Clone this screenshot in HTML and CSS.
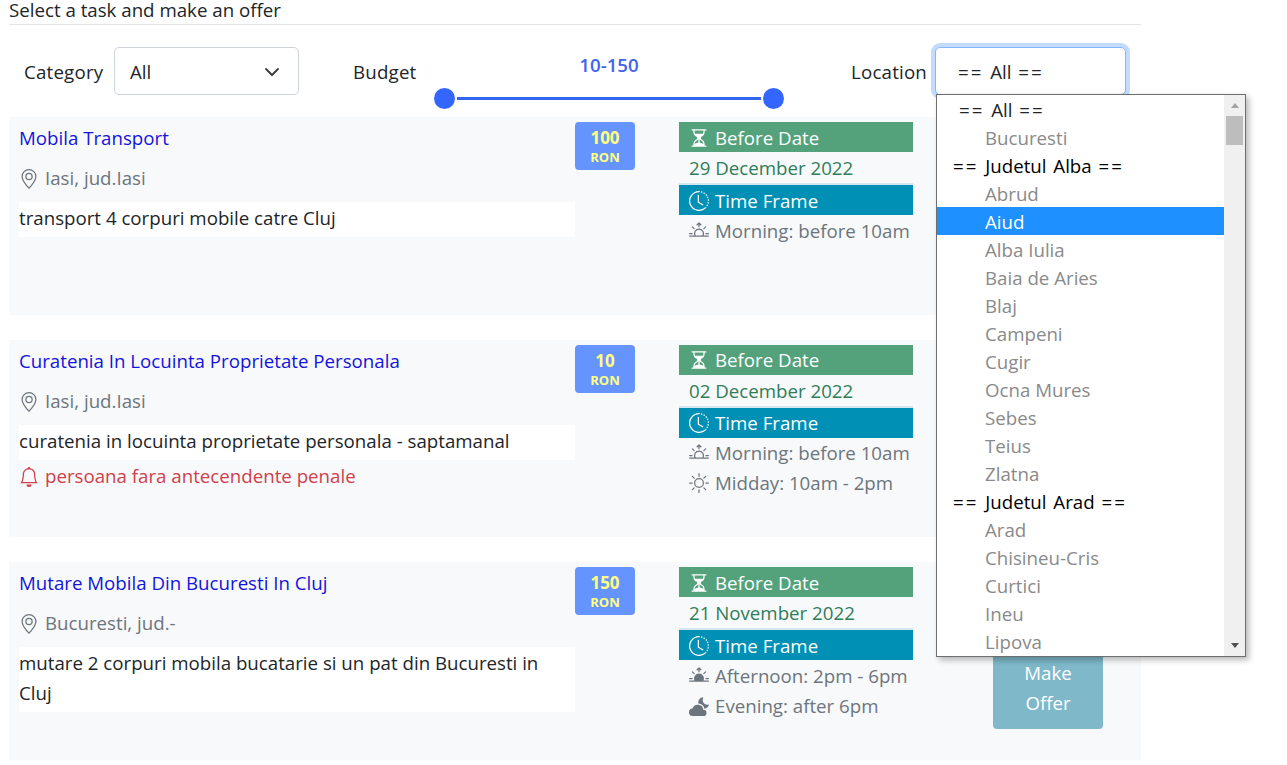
FILE: index.html
```html
<!DOCTYPE html>
<html lang="en">
<head>
  <meta charset="utf-8">
  <title>Tasks</title>
  <link rel="stylesheet" href="styles.css">
</head>
<body>
  <svg class="sprite" xmlns="http://www.w3.org/2000/svg">
    <symbol id="i-geo" viewBox="0 0 16 16"><path d="M12.166 8.94c-.524 1.062-1.234 2.12-1.96 3.07A31.493 31.493 0 0 1 8 14.58a31.481 31.481 0 0 1-2.206-2.57c-.726-.95-1.436-2.008-1.96-3.07C3.304 7.867 3 6.862 3 6a5 5 0 0 1 10 0c0 .862-.305 1.867-.834 2.94zM8 16s6-5.686 6-10A6 6 0 0 0 2 6c0 4.314 6 10 6 10z"/><path d="M8 8a2 2 0 1 1 0-4 2 2 0 0 1 0 4zm0 1a3 3 0 1 0 0-6 3 3 0 0 0 0 6z"/></symbol>
    <symbol id="i-bell" viewBox="0 0 16 16"><path d="M8 16a2 2 0 0 0 2-2H6a2 2 0 0 0 2 2zM8 1.918l-.797.161A4.002 4.002 0 0 0 4 6c0 .628-.134 2.197-.459 3.742-.16.767-.376 1.566-.663 2.258h10.244c-.287-.692-.502-1.49-.663-2.258C12.134 8.197 12 6.628 12 6a4.002 4.002 0 0 0-3.203-3.92L8 1.917zM14.22 12c.223.447.481.801.78 1H1c.299-.199.557-.553.78-1C2.68 10.2 3 6.88 3 6c0-2.42 1.72-4.44 4.005-4.901a1 1 0 1 1 1.99 0A5.002 5.002 0 0 1 13 6c0 .88.32 4.2 1.22 6z"/></symbol>
    <symbol id="i-hourglass" viewBox="0 0 16 16"><path d="M2.5 15a.5.5 0 1 1 0-1h1v-1a4.5 4.5 0 0 1 2.557-4.06c.29-.139.443-.377.443-.59v-.7c0-.213-.154-.451-.443-.59A4.5 4.5 0 0 1 3.5 3V2h-1a.5.5 0 0 1 0-1h11a.5.5 0 0 1 0 1h-1v1a4.5 4.5 0 0 1-2.557 4.06c-.29.139-.443.377-.443.59v.7c0 .213.154.451.443.59A4.5 4.5 0 0 1 12.5 13v1h1a.5.5 0 0 1 0 1h-11zm2-13v1c0 .537.12 1.045.337 1.5h6.326c.216-.455.337-.963.337-1.5V2h-7zm3 6.35c0 .701-.478 1.236-1.011 1.492A3.5 3.5 0 0 0 4.5 13s.866-1.299 3-1.48V8.35zm1 0v3.17c2.134.181 3 1.48 3 1.48a3.5 3.5 0 0 0-1.989-3.158C8.978 9.586 8.5 9.052 8.5 8.351z"/></symbol>
    <symbol id="i-clock" viewBox="0 0 16 16"><path d="M8.515 1.019A7 7 0 0 0 8 1V0a8 8 0 0 1 .589.022l-.074.997zm2.004.45a7.003 7.003 0 0 0-.985-.299l.219-.976c.383.086.76.2 1.126.342l-.36.933zm1.37.71a7.01 7.01 0 0 0-.439-.27l.493-.87a8.025 8.025 0 0 1 .979.654l-.615.789a6.996 6.996 0 0 0-.418-.302zm1.834 1.79a6.99 6.99 0 0 0-.653-.796l.724-.69c.27.285.52.59.747.91l-.818.576zm.744 1.352a7.08 7.08 0 0 0-.214-.468l.893-.45a7.976 7.976 0 0 1 .45 1.088l-.95.313a7.023 7.023 0 0 0-.179-.483zm.53 2.507a6.991 6.991 0 0 0-.1-1.025l.985-.17c.067.386.106.778.116 1.17l-1 .025zm-.131 1.538c.033-.17.06-.339.081-.51l.993.123a7.957 7.957 0 0 1-.23 1.155l-.964-.267c.046-.165.086-.332.12-.501zm-.952 2.379c.184-.29.346-.594.486-.908l.914.405c-.16.36-.345.706-.555 1.038l-.845-.535zm-.964 1.205c.122-.122.239-.248.35-.378l.758.653a8.073 8.073 0 0 1-.401.432l-.707-.707z"/><path d="M8 1a7 7 0 1 0 4.95 11.95l.707.707A8.001 8.001 0 1 1 8 0v1z"/><path d="M7.5 3a.5.5 0 0 1 .5.5v5.21l3.248 1.856a.5.5 0 0 1-.496.868l-3.5-2A.5.5 0 0 1 7 9V3.5a.5.5 0 0 1 .5-.5z"/></symbol>
    <symbol id="i-sunrise" viewBox="0 0 16 16"><path d="M7.646 1.146a.5.5 0 0 1 .708 0l1.5 1.5a.5.5 0 0 1-.708.708L8.5 2.707V4.5a.5.5 0 0 1-1 0V2.707l-.646.647a.5.5 0 1 1-.708-.708l1.5-1.5zM2.343 4.343a.5.5 0 0 1 .707 0l1.414 1.414a.5.5 0 0 1-.707.707L2.343 5.05a.5.5 0 0 1 0-.707zm11.314 0a.5.5 0 0 1 0 .707l-1.414 1.414a.5.5 0 1 1-.707-.707l1.414-1.414a.5.5 0 0 1 .707 0zM8 7a3 3 0 0 1 2.599 4.5H5.4A3 3 0 0 1 8 7zm3.71 4.5a4 4 0 1 0-7.418 0H.499a.5.5 0 0 0 0 1h15a.5.5 0 0 0 0-1h-3.79zM0 10a.5.5 0 0 1 .5-.5h2a.5.5 0 0 1 0 1h-2A.5.5 0 0 1 0 10zm13 0a.5.5 0 0 1 .5-.5h2a.5.5 0 0 1 0 1h-2a.5.5 0 0 1-.5-.5z"/></symbol>
    <symbol id="i-sun" viewBox="0 0 16 16"><path d="M8 11a3 3 0 1 1 0-6 3 3 0 0 1 0 6zm0 1a4 4 0 1 0 0-8 4 4 0 0 0 0 8zM8 0a.5.5 0 0 1 .5.5v2a.5.5 0 0 1-1 0v-2A.5.5 0 0 1 8 0zm0 13a.5.5 0 0 1 .5.5v2a.5.5 0 0 1-1 0v-2A.5.5 0 0 1 8 13zm8-5a.5.5 0 0 1-.5.5h-2a.5.5 0 0 1 0-1h2a.5.5 0 0 1 .5.5zM3 8a.5.5 0 0 1-.5.5h-2a.5.5 0 0 1 0-1h2A.5.5 0 0 1 3 8zm10.657-5.657a.5.5 0 0 1 0 .707l-1.414 1.415a.5.5 0 1 1-.707-.708l1.414-1.414a.5.5 0 0 1 .707 0zm-9.193 9.193a.5.5 0 0 1 0 .707L3.05 13.657a.5.5 0 0 1-.707-.707l1.414-1.414a.5.5 0 0 1 .707 0zm9.193 2.121a.5.5 0 0 1-.707 0l-1.414-1.414a.5.5 0 0 1 .707-.707l1.414 1.414a.5.5 0 0 1 0 .707zM4.464 4.465a.5.5 0 0 1-.707 0L2.343 3.05a.5.5 0 1 1 .707-.707l1.414 1.414a.5.5 0 0 1 0 .708z"/></symbol>
    <symbol id="i-sunset" viewBox="0 0 16 16"><path d="M7.646 1.146a.5.5 0 0 1 .708 0l1.5 1.5a.5.5 0 0 1-.708.708L8.5 2.707V4.5a.5.5 0 0 1-1 0V2.707l-.646.647a.5.5 0 1 1-.708-.708l1.5-1.5zM2.343 4.343a.5.5 0 0 1 .707 0l1.414 1.414a.5.5 0 0 1-.707.707L2.343 5.05a.5.5 0 0 1 0-.707zm11.314 0a.5.5 0 0 1 0 .707l-1.414 1.414a.5.5 0 1 1-.707-.707l1.414-1.414a.5.5 0 0 1 .707 0zM11.709 11.5a4 4 0 1 0-7.418 0H.5a.5.5 0 0 0 0 1h15a.5.5 0 0 0 0-1h-3.79zM0 10a.5.5 0 0 1 .5-.5h2a.5.5 0 0 1 0 1h-2A.5.5 0 0 1 0 10zm13 0a.5.5 0 0 1 .5-.5h2a.5.5 0 0 1 0 1h-2a.5.5 0 0 1-.5-.5z"/></symbol>
    <symbol id="i-moon" viewBox="0 0 16 16"><path d="M11.473 11a4.5 4.5 0 0 0-8.72-.99A3 3 0 0 0 3 16h8.5a2.5 2.5 0 0 0 0-5h-.027z"/><path d="M11.3 1.8a.5.5 0 0 0-.6-.75A4.6 4.6 0 0 0 7.5 6a5.5 5.5 0 0 1 4.9 4.1 4.6 4.6 0 0 0 3.5-2.6.5.5 0 0 0-.7-.6 3.6 3.6 0 0 1-3.9-5.1z"/></symbol>
  </svg>

  <div class="container">
    <div class="page-title">Select a task and make an offer</div>

    <div class="filters">
      <span class="filter-label">Category</span>
      <div class="select category-select">
        <span>All</span>
        <svg class="chevron" viewBox="0 0 16 16"><path fill="none" stroke="#343a40" stroke-linecap="round" stroke-linejoin="round" stroke-width="1.8" d="M2 5l6 6 6-6"/></svg>
      </div>
      <span class="filter-label budget-label">Budget</span>
      <div class="budget">
        <div class="budget-value">10-150</div>
        <div class="slider">
          <span class="thumb"></span>
          <span class="track"></span>
          <span class="thumb"></span>
        </div>
      </div>
      <span class="filter-label location-label">Location</span>
      <div class="select location-select">
        <span class="all-value"><span class="eq">==</span> All <span class="eq">==</span></span>
        <div class="dropdown">
          <ul class="options">
            <li class="top"><span class="eq">==</span> All <span class="eq">==</span></li>
            <li class="item">Bucuresti</li>
            <li class="group"><span class="eq">==</span> Judetul Alba <span class="eq">==</span></li>
            <li class="item">Abrud</li>
            <li class="item selected">Aiud</li>
            <li class="item">Alba Iulia</li>
            <li class="item">Baia de Aries</li>
            <li class="item">Blaj</li>
            <li class="item">Campeni</li>
            <li class="item">Cugir</li>
            <li class="item">Ocna Mures</li>
            <li class="item">Sebes</li>
            <li class="item">Teius</li>
            <li class="item">Zlatna</li>
            <li class="group"><span class="eq">==</span> Judetul Arad <span class="eq">==</span></li>
            <li class="item">Arad</li>
            <li class="item">Chisineu-Cris</li>
            <li class="item">Curtici</li>
            <li class="item">Ineu</li>
            <li class="item">Lipova</li>
          </ul>
          <div class="scrollbar">
            <span class="arrow-up"></span>
            <span class="scroll-thumb"></span>
            <span class="arrow-down"></span>
          </div>
        </div>
      </div>
    </div>

    <div class="task">
      <div class="task-main">
        <a class="task-title" href="#">Mobila Transport</a>
        <div class="task-place"><svg class="icon"><use href="#i-geo"/></svg>Iasi, jud.Iasi</div>
        <div class="task-desc">transport 4 corpuri mobile catre Cluj</div>
      </div>
      <div class="price"><b>100</b><small>RON</small></div>
      <div class="times">
        <div class="bar bar-date"><svg class="icon"><use href="#i-hourglass"/></svg>Before Date</div>
        <div class="date">29 December 2022</div>
        <div class="bar bar-time"><svg class="icon"><use href="#i-clock"/></svg>Time Frame</div>
        <div class="slot"><svg class="icon"><use href="#i-sunrise"/></svg>Morning: before 10am</div>
      </div>
    </div>

    <div class="task">
      <div class="task-main">
        <a class="task-title" href="#">Curatenia In Locuinta Proprietate Personala</a>
        <div class="task-place"><svg class="icon"><use href="#i-geo"/></svg>Iasi, jud.Iasi</div>
        <div class="task-desc">curatenia in locuinta proprietate personala - saptamanal</div>
        <div class="task-alert"><svg class="icon"><use href="#i-bell"/></svg>persoana fara antecendente penale</div>
      </div>
      <div class="price"><b>10</b><small>RON</small></div>
      <div class="times">
        <div class="bar bar-date"><svg class="icon"><use href="#i-hourglass"/></svg>Before Date</div>
        <div class="date">02 December 2022</div>
        <div class="bar bar-time"><svg class="icon"><use href="#i-clock"/></svg>Time Frame</div>
        <div class="slot"><svg class="icon"><use href="#i-sunrise"/></svg>Morning: before 10am</div>
        <div class="slot"><svg class="icon"><use href="#i-sun"/></svg>Midday: 10am - 2pm</div>
      </div>
    </div>

    <div class="task">
      <div class="task-main">
        <a class="task-title" href="#">Mutare Mobila Din Bucuresti In Cluj</a>
        <div class="task-place"><svg class="icon"><use href="#i-geo"/></svg>Bucuresti, jud.-</div>
        <div class="task-desc">mutare 2 corpuri mobila bucatarie si un pat din Bucuresti in Cluj</div>
      </div>
      <div class="price"><b>150</b><small>RON</small></div>
      <div class="times">
        <div class="bar bar-date"><svg class="icon"><use href="#i-hourglass"/></svg>Before Date</div>
        <div class="date">21 November 2022</div>
        <div class="bar bar-time"><svg class="icon"><use href="#i-clock"/></svg>Time Frame</div>
        <div class="slot"><svg class="icon"><use href="#i-sunset"/></svg>Afternoon: 2pm - 6pm</div>
        <div class="slot"><svg class="icon"><use href="#i-moon"/></svg>Evening: after 6pm</div>
      </div>
      <div class="action"><button class="offer">Make Offer</button></div>
    </div>
  </div>
</body>
</html>
```

FILE: styles.css
```css
html, body {
  height: 100%;
  overflow: hidden;
}

body {
  margin: 0;
  font-family: "Open Sans", "Noto Sans", Arial, sans-serif;
  font-size: 18.7px;
  line-height: 30px;
  color: #212529;
  background-color: #fff;
}

.sprite {
  display: none;
}

.container {
  width: 1132px;
  margin-left: 9px;
}

.page-title {
  line-height: 20px;
  padding-bottom: 4px;
  border-bottom: 1px solid #e3e5e7;
}

/* filters row */
.filters {
  display: flex;
  align-items: center;
  height: 48px;
  margin: 22px 0;
  padding-left: 15px;
}

.filter-label {
  flex: none;
  white-space: nowrap;
  padding-top: 1px;
  letter-spacing: 0.2px;
}

.filter-label:first-child {
  width: 80px;
}

.select {
  display: flex;
  align-items: center;
  box-sizing: border-box;
  height: 48px;
  padding-top: 1px;
  background: #fff;
  border: 1px solid #ced4da;
  border-radius: 5px;
}

.category-select {
  justify-content: space-between;
  width: 185px;
  margin-left: 10px;
  padding-left: 15px;
  padding-right: 18px;
}

.chevron {
  width: 16px;
  height: 16px;
}

.budget-label {
  width: 64px;
  margin-left: 54px;
}

.budget {
  align-self: flex-start;
  width: 350px;
  margin: 3px 0 0 17px;
  text-align: center;
}

.budget-value {
  line-height: 30px;
  font-weight: 600;
  color: #4263eb;
}

.slider {
  display: flex;
  align-items: center;
  margin-top: 8px;
}

.thumb {
  flex: none;
  width: 21px;
  height: 21px;
  border-radius: 50%;
  background-color: #3366ff;
}

.track {
  flex: 1;
  height: 3px;
  margin: 0 2px;
  background-color: #3366ee;
}

.location-label {
  width: 74px;
  margin-left: 67px;
}

.location-select {
  position: relative;
  width: 191px;
  margin-left: 10px;
  padding-left: 22px;
  border-color: #86b7fe;
  box-shadow: 0 0 0 4px #c2dbfe;
}

.eq {
  letter-spacing: 2px;
}

.all-value, .top, .group {
  word-spacing: 2px;
}

/* open list of the location select */
.dropdown {
  position: absolute;
  top: 46px;
  left: 0;
  display: flex;
  box-sizing: border-box;
  width: 310px;
  height: 563px;
  background: #fff;
  border: 1px solid #6e6e6e;
  box-shadow: 3px 3px 6px rgba(0, 0, 0, 0.28);
  color: #000;
}

.options {
  flex: 1;
  margin: 0;
  padding: 0;
  list-style: none;
  overflow: hidden;
}

.options li {
  height: 28px;
  line-height: 30px;
  white-space: nowrap;
}

.top {
  padding-left: 22px;
  color: #212529;
}

.group {
  padding-left: 16px;
}

.item {
  padding-left: 48px;
  color: #8a8a8a;
}

.options .selected {
  background-color: #1e90ff;
  color: #fff;
}

.scrollbar {
  flex: none;
  display: flex;
  flex-direction: column;
  align-items: center;
  width: 21px;
  background-color: #f0f0f0;
}

.arrow-up, .arrow-down {
  flex: none;
  width: 0;
  height: 0;
  border-left: 4px solid transparent;
  border-right: 4px solid transparent;
}

.arrow-up {
  margin: 8px 0 8px;
  border-bottom: 5px solid #a3a3a3;
}

.scroll-thumb {
  flex: none;
  width: 17px;
  height: 29px;
  background-color: #bdbdbd;
}

.arrow-down {
  margin: auto 0 8px;
  border-top: 5px solid #505050;
}

/* task cards */
.task {
  display: flex;
  box-sizing: border-box;
  height: 197.5px;
  margin-bottom: 25px;
  padding: 5px 0 0 10px;
  background-color: #f8f9fa;
}

.task-main {
  flex: none;
  width: 556px;
}

.task-title {
  display: block;
  margin-top: 1px;
  color: #1414dc;
  text-decoration: none;
}

.task-place {
  margin-top: 10px;
  color: #6c757d;
}

.icon {
  flex: none;
  width: 20px;
  height: 20px;
  margin-right: 6px;
  fill: currentColor;
  vertical-align: -4px;
}

.task-desc {
  margin-top: 9px;
  padding: 1px 0 4px;
  background-color: #fff;
}

.task-alert {
  margin-top: 1px;
  color: #cf3f4c;
}

.price {
  flex: none;
  display: flex;
  flex-direction: column;
  align-items: center;
  width: 60px;
  height: 48px;
  padding-top: 5px;
  box-sizing: border-box;
  background-color: #6694ff;
  border-radius: 4px;
  color: #ffff80;
  line-height: 22px;
}

.price b {
  font-size: 17px;
  font-weight: 700;
}

.price small {
  font-size: 13px;
  font-weight: 700;
  line-height: 17px;
}

.times {
  flex: none;
  width: 234px;
  margin-left: 44px;
}

.bar {
  display: flex;
  align-items: center;
  height: 30px;
  padding: 1px 0 0 10px;
  box-sizing: border-box;
  color: #fff;
}

.bar-date {
  background-color: #53a27c;
}

.bar-time {
  background-color: #0090b5;
}

.date {
  padding-left: 10px;
  line-height: 31px;
  border-bottom: 2px solid #d5e6ef;
  color: #2f7d59;
}

.slot {
  display: flex;
  align-items: center;
  height: 30px;
  padding: 1px 0 0 10px;
  box-sizing: border-box;
  color: #6c757d;
  white-space: nowrap;
}

.action {
  flex: 1;
  display: flex;
  align-items: flex-end;
  padding-bottom: 31px;
}

.offer {
  width: 110px;
  height: 78px;
  margin-left: 80px;
  padding: 0 25px 4px;
  border: none;
  border-radius: 4px;
  background-color: #7eb8c9;
  font: inherit;
  color: #fff;
}
```
